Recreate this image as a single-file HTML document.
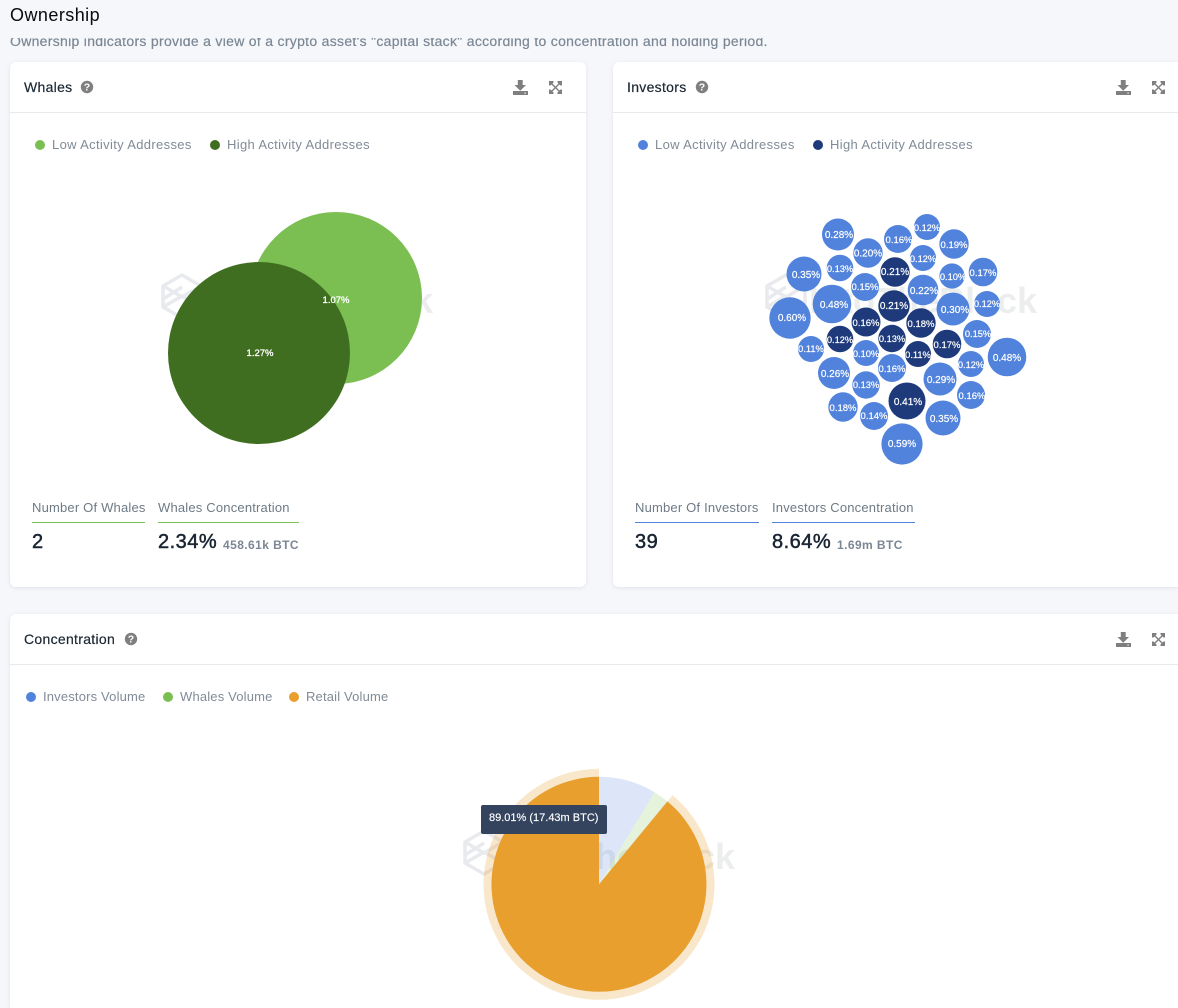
<!DOCTYPE html>
<html><head><meta charset="utf-8"><title>Ownership</title>
<style>
html,body{margin:0;padding:0;width:1178px;height:1008px;overflow:hidden;background:#f6f7fb;font-family:"Liberation Sans",sans-serif}
#p{position:relative;width:1178px;height:1008px;overflow:hidden}
.a{position:absolute;white-space:nowrap}
.card{position:absolute;background:#fff;border-radius:6px;box-shadow:0 1px 4px rgba(40,50,80,.1)}
.hr{position:absolute;height:1px;background:#e7e9ed}
.ct{font-size:14px;line-height:16px;color:#1b2733;letter-spacing:.3px;-webkit-text-stroke:.2px #1b2733}
.lg{font-size:13px;line-height:16px;color:#808b97;letter-spacing:.34px}
.lg2{letter-spacing:.17px}
.dot{position:absolute;width:10px;height:10px;border-radius:50%}
.sl{font-size:13px;line-height:16px;color:#6e7a86;letter-spacing:.19px}
.ln{position:absolute;height:1px}
.big{font-size:20px;line-height:24px;color:#1a2533;letter-spacing:.5px;-webkit-text-stroke:.5px #1a2533}
.sm{font-size:12px;line-height:14px;color:#7b8794;font-weight:bold;letter-spacing:.42px}
svg{position:absolute;left:0;top:0}
</style></head><body><div id="p">

<div class="a" style="left:10px;top:4px;font-size:18px;line-height:22px;color:#0a0a0a;letter-spacing:.45px">Ownership</div>
<div class="a" style="left:0;top:38px;width:1178px;height:11px;overflow:hidden"><div class="a" style="left:10px;top:-5px;font-size:14px;line-height:16px;color:#7b8794;letter-spacing:.3px;-webkit-text-stroke:.2px #7b8794">Ownership indicators provide a view of a crypto asset's "capital stack" according to concentration and holding period.</div></div>

<div class="card" style="left:10px;top:62px;width:576px;height:525px"></div>
<div class="card" style="left:613px;top:62px;width:565px;height:525px;border-radius:6px 0 0 6px"></div>
<div class="card" style="left:10px;top:614px;width:1168px;height:394px;border-radius:6px 0 0 0"></div>
<div class="hr" style="left:10px;top:112px;width:576px"></div>
<div class="hr" style="left:613px;top:112px;width:565px"></div>
<div class="hr" style="left:10px;top:664px;width:1168px"></div>

<svg width="1178" height="1008" viewBox="0 0 1178 1008" font-family="'Liberation Sans',sans-serif">
<defs>
<g id="wm">
<g fill="none" stroke="#e9eaed" stroke-width="3.500" stroke-linejoin="round"><path d="M0 11 L19 0 L38 11 V32 L19 43 L0 32 Z"/><path d="M0 11 L19 22 L38 11"/><path d="M0 24 L19 12"/><path d="M0 32 L19 21 L38 32"/></g>
<text x="42" y="38" font-size="36" font-weight="bold" fill="#eceded">IntoTheBlock</text>
</g>
<g id="help"><circle r="6.200" fill="#7f7f7f"/><text y="3.700" text-anchor="middle" font-size="10.500" font-weight="bold" fill="#fff">?</text></g>
<g id="dl" fill="#7f7f7f"><path d="M4.800 0H9.700V5H13L7.250 10.800L1.500 5H4.800Z"/><path d="M0 11H15V15H0Z"/><rect x="11.500" y="12.500" width="1.200" height="1.200" fill="#fff"/></g>
<g id="ex"><path d="M2 2L11 11M11 2L2 11" stroke="#7f7f7f" stroke-width="1.400" fill="none"/><path d="M0 0H4.500V1.500L1.500 4.500H0ZM13 0V4.500H11.500L8.500 1.500V0ZM0 13V8.500H1.500L4.500 11.500V13ZM13 13H8.500V11.500L11.500 8.500H13Z" fill="#7f7f7f"/></g>
</defs>

<use href="#wm" x="163" y="275"/>
<use href="#wm" x="767" y="275"/>
<use href="#wm" x="465" y="831"/>

<use href="#help" x="87" y="87"/><use href="#help" x="702" y="87"/><use href="#help" x="131" y="639"/>
<use href="#dl" x="513" y="80"/><use href="#ex" x="549" y="81"/>
<use href="#dl" x="1116" y="80"/><use href="#ex" x="1152" y="81"/>
<use href="#dl" x="1116" y="632"/><use href="#ex" x="1152" y="633"/>

<circle cx="336" cy="298" r="86" fill="#7bbf52"/>
<circle cx="259" cy="353" r="91" fill="#406e21"/>
<g font-size="9.500" fill="#fff" stroke="#fff" stroke-width=".3" text-anchor="middle"><text x="336" y="303">1.07%</text><text x="260" y="356">1.27%</text></g>

<g font-size="10" fill="#fff" text-anchor="middle" stroke="#fff" stroke-width=".2">
<g fill="#5283dc" stroke="none">
<circle cx="838" cy="234.500" r="16"/><circle cx="868" cy="253" r="14.700"/><circle cx="898" cy="239" r="14"/><circle cx="927" cy="227" r="13"/><circle cx="954" cy="244" r="14.700"/><circle cx="923" cy="258" r="13"/><circle cx="804" cy="274" r="17.500"/><circle cx="840" cy="268" r="13.300"/><circle cx="952" cy="276" r="12.600"/><circle cx="983" cy="272" r="14.300"/><circle cx="865" cy="287" r="14"/><circle cx="923" cy="290" r="15.300"/><circle cx="832" cy="304" r="19.300"/><circle cx="953" cy="309" r="16.500"/><circle cx="987" cy="304" r="13"/><circle cx="790" cy="318" r="20.700"/><circle cx="977" cy="334" r="14"/><circle cx="811" cy="349" r="13"/><circle cx="866" cy="353" r="13"/><circle cx="971" cy="364" r="13"/><circle cx="1007" cy="357" r="19.300"/><circle cx="834" cy="373" r="16"/><circle cx="892" cy="368" r="14"/><circle cx="940" cy="379" r="16.500"/><circle cx="866" cy="385" r="13.700"/><circle cx="971" cy="395" r="14"/><circle cx="843" cy="407" r="14.700"/><circle cx="874" cy="416" r="14"/><circle cx="943" cy="418" r="17.500"/><circle cx="902" cy="444" r="20.600"/>
</g>
<g fill="#1e3a7a" stroke="none">
<circle cx="895" cy="272" r="14.700"/><circle cx="894" cy="306" r="15.700"/><circle cx="866" cy="322" r="14.500"/><circle cx="921" cy="323" r="14.700"/><circle cx="840" cy="339" r="13.300"/><circle cx="892" cy="338.500" r="13.700"/><circle cx="918" cy="354" r="13"/><circle cx="947" cy="344" r="14.300"/><circle cx="907" cy="401" r="18.500"/>
</g>
<text x="839" y="238">0.28%</text><text x="868" y="256.500">0.20%</text><text x="899" y="243" font-size="9.500">0.16%</text><text x="927" y="231" font-size="9.300">0.12%</text><text x="954" y="248" font-size="9.500">0.19%</text><text x="923" y="262" font-size="9.300">0.12%</text><text x="806" y="278">0.35%</text><text x="840" y="272" font-size="9.300">0.13%</text><text x="895" y="275">0.21%</text><text x="953" y="280" font-size="9.300">0.10%</text><text x="983" y="276" font-size="9.500">0.17%</text><text x="865" y="290" font-size="9.500">0.15%</text><text x="924" y="294">0.22%</text><text x="834" y="308">0.48%</text><text x="894" y="309">0.21%</text><text x="955" y="313">0.30%</text><text x="987" y="307" font-size="9.300">0.12%</text><text x="792" y="321">0.60%</text><text x="866" y="326" font-size="9.500">0.16%</text><text x="921" y="327" font-size="9.500">0.18%</text><text x="978" y="337" font-size="9.300">0.15%</text>
<text x="811" y="352" font-size="9.300">0.11%</text><text x="840" y="343" font-size="9.300">0.12%</text><text x="892" y="342" font-size="9.300">0.13%</text><text x="866" y="357" font-size="9.300">0.10%</text><text x="918" y="358" font-size="9.300">0.11%</text><text x="947" y="348" font-size="9.500">0.17%</text><text x="971" y="368" font-size="9.300">0.12%</text><text x="1007" y="361">0.48%</text><text x="835" y="377">0.26%</text><text x="892" y="372" font-size="9.500">0.16%</text><text x="941" y="383">0.29%</text><text x="866" y="388" font-size="9.300">0.13%</text><text x="972" y="399" font-size="9.500">0.16%</text><text x="908" y="405">0.41%</text><text x="843" y="411" font-size="9.500">0.18%</text><text x="874" y="419" font-size="9.500">0.14%</text><text x="944" y="422">0.35%</text><text x="902" y="447">0.59%</text>
</g>

<path d="M599 884.300V776.800A107.500 107.500 0 0 1 654.500 792.200Z" fill="#5283dc" fill-opacity=".2"/>
<path d="M599 884.300L654.500 792.200A107.500 107.500 0 0 1 667.400 801.400Z" fill="#7bbf52" fill-opacity=".2"/>
<path d="M599 884.300L667.400 801.400A107.500 107.500 0 1 1 599 776.800Z" fill="#e89f2e"/>
<path d="M599 768.800A115.500 115.500 0 1 0 672.500 795.200L667.400 801.400A107.500 107.500 0 1 1 599 776.800Z" fill="#e89f2e" fill-opacity=".25"/>
</svg>

<div class="a ct" style="left:24px;top:79px">Whales</div>
<div class="a ct" style="left:627px;top:79px">Investors</div>
<div class="a ct" style="left:24px;top:631px">Concentration</div>

<div class="dot" style="left:35px;top:140px;background:#7bbf52"></div><div class="a lg" style="left:52px;top:137px">Low Activity Addresses</div>
<div class="dot" style="left:210px;top:140px;background:#406e21"></div><div class="a lg" style="left:227px;top:137px">High Activity Addresses</div>
<div class="dot" style="left:638px;top:140px;background:#5283dc"></div><div class="a lg" style="left:655px;top:137px">Low Activity Addresses</div>
<div class="dot" style="left:813px;top:140px;background:#1e3a7a"></div><div class="a lg" style="left:830px;top:137px">High Activity Addresses</div>
<div class="dot" style="left:26px;top:692px;background:#5283dc"></div><div class="a lg lg2" style="left:43px;top:689px">Investors Volume</div>
<div class="dot" style="left:163px;top:692px;background:#7bbf52"></div><div class="a lg lg2" style="left:180px;top:689px">Whales Volume</div>
<div class="dot" style="left:289px;top:692px;background:#e89f2e"></div><div class="a lg lg2" style="left:306px;top:689px">Retail Volume</div>

<div class="a sl" style="left:32px;top:500px">Number Of Whales</div><div class="ln" style="left:32px;top:522px;width:113px;background:#7bbf52"></div>
<div class="a sl" style="left:158px;top:500px">Whales Concentration</div><div class="ln" style="left:158px;top:522px;width:141px;background:#7bbf52"></div>
<div class="a big" style="left:32px;top:530px">2</div>
<div class="a big" style="left:158px;top:530px">2.34%</div><div class="a sm" style="left:223px;top:538px">458.61k BTC</div>

<div class="a sl" style="left:635px;top:500px">Number Of Investors</div><div class="ln" style="left:635px;top:522px;width:124px;background:#5283dc"></div>
<div class="a sl" style="left:772px;top:500px">Investors Concentration</div><div class="ln" style="left:772px;top:522px;width:143px;background:#5283dc"></div>
<div class="a big" style="left:635px;top:530px">39</div>
<div class="a big" style="left:772px;top:530px">8.64%</div><div class="a sm" style="left:837px;top:538px">1.69m BTC</div>

<div class="a" style="left:481px;top:805px;width:126px;height:29px;background:#34435e;border-radius:2px"></div>
<div class="a" style="left:489px;top:811px;font-size:11px;line-height:14px;color:#fff;-webkit-text-stroke:.15px #fff">89.01% (17.43m BTC)</div>

</div></body></html>
